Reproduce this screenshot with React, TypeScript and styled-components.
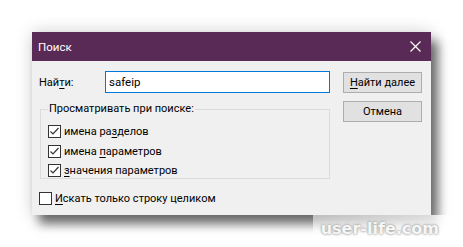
import styled, { createGlobalStyle } from 'styled-components';

const GlobalStyle = createGlobalStyle`
  html, body {
    margin: 0;
    padding: 0;
    background: #ffffff;
  }
  body {
    font-family: Roboto, 'Noto Sans', sans-serif;
    font-size: 11px;
    color: #000;
  }
`;

const Page = styled.div`
  position: relative;
  width: 463px;
  height: 247px;
  padding: 32px 0 0 32px;
  box-sizing: border-box;
  overflow: hidden;
`;

const Dialog = styled.div`
  width: 399px;
  height: 183px;
  background: #f0f0f0;
  box-shadow: 0 0 16px rgba(0, 0, 0, 0.18), 7px 9px 10px rgba(0, 0, 0, 0.55);
  display: flex;
  flex-direction: column;
`;

const TitleBar = styled.div`
  height: 29px;
  background: #582a55;
  color: #fff;
  display: flex;
  align-items: center;
  justify-content: space-between;
  padding: 0 10px 0 6px;
  font-size: 11.5px;
`;

const CloseIcon = styled.svg`
  width: 11px;
  height: 11px;
`;

const Body = styled.div`
  flex: 1;
  display: flex;
  gap: 13px;
  padding: 10px 9px 0 7px;
`;

const LeftColumn = styled.div`
  width: 291px;
  display: flex;
  flex-direction: column;
`;

const FindRow = styled.div`
  display: flex;
  align-items: center;
  height: 22px;
`;

const FindLabel = styled.span`
  width: 66px;
`;

const TextInput = styled.div`
  flex: 1;
  height: 22px;
  box-sizing: border-box;
  border: 1px solid #0078d7;
  background: #fff;
  display: flex;
  align-items: center;
  padding-left: 3px;
  font-size: 11.5px;
`;

const Group = styled.fieldset`
  margin: 9px 0 0 1px;
  padding: 6px 0 5px 7px;
  border: 1px solid #dcdcdc;
  height: 77px;
  box-sizing: border-box;
  min-width: 0;
`;

const Legend = styled.legend`
  padding: 0 1px;
  margin-left: 0;
  line-height: 14px;
`;

const CheckRow = styled.label`
  display: flex;
  align-items: center;
  gap: 3px;
  height: 19.5px;
`;

const Box = styled.span`
  width: 13px;
  height: 13px;
  box-sizing: border-box;
  border: 1px solid #333;
  background: #fff;
  display: flex;
  align-items: center;
  justify-content: center;
`;

const Key = styled.span`
  text-decoration: underline;
  text-underline-offset: 2px;
`;

const BottomRow = styled.div`
  margin-top: 10px;
`;

const RightColumn = styled.div`
  width: 79px;
  display: flex;
  flex-direction: column;
  gap: 8px;
  padding-top: 1px;
`;

const Button = styled.div`
  height: 21px;
  box-sizing: border-box;
  border: 1px solid #adadad;
  background: #e1e1e1;
  display: flex;
  align-items: center;
  justify-content: center;
`;

const Watermark = styled.div`
  position: absolute;
  left: 313px;
  top: 215px;
  width: 140px;
  height: 26px;
  background: linear-gradient(to right, rgba(255,255,255,0.55), rgba(255,255,255,0.8));
  display: flex;
  align-items: center;
  justify-content: flex-end;
  padding-right: 14px;
  box-sizing: border-box;
  font-family: 'DejaVu Sans', sans-serif;
  font-weight: bold;
  font-size: 16px;
  color: #f6f6f6;
  text-shadow: 0 0 2px #999, 0 0 3px #aaa;
`;

function Check({ checked }: { checked: boolean }) {
  return (
    <Box>
      {checked && (
        <svg width="11" height="11" viewBox="0 0 11 11">
          <path d="M1.5 5.5 L4 8 L9.5 2" fill="none" stroke="#333" strokeWidth="1.2" />
        </svg>
      )}
    </Box>
  );
}

export default function App() {
  return (
    <Page>
      <GlobalStyle />
      <Dialog>
        <TitleBar>
          <span>Поиск</span>
          <CloseIcon viewBox="0 0 11 11">
            <path d="M0.5 0.5 L10.5 10.5 M10.5 0.5 L0.5 10.5" stroke="#fff" strokeWidth="1.2" />
          </CloseIcon>
        </TitleBar>
        <Body>
          <LeftColumn>
            <FindRow>
              <FindLabel>
                Най<Key>т</Key>и:
              </FindLabel>
              <TextInput>safeip</TextInput>
            </FindRow>
            <Group>
              <Legend>Просматривать при поиске:</Legend>
              <CheckRow>
                <Check checked />
                <span>
                  имена ра<Key>з</Key>делов
                </span>
              </CheckRow>
              <CheckRow>
                <Check checked />
                <span>
                  имена <Key>п</Key>араметров
                </span>
              </CheckRow>
              <CheckRow>
                <Check checked />
                <span>
                  <Key>з</Key>начения параметров
                </span>
              </CheckRow>
            </Group>
            <BottomRow>
              <CheckRow>
                <Check checked={false} />
                <span>
                  <Key>И</Key>скать только строку целиком
                </span>
              </CheckRow>
            </BottomRow>
          </LeftColumn>
          <RightColumn>
            <Button>
              <span>
                <Key>Н</Key>айти далее
              </span>
            </Button>
            <Button>Отмена</Button>
          </RightColumn>
        </Body>
      </Dialog>
      <Watermark>user-life.com</Watermark>
    </Page>
  );
}
